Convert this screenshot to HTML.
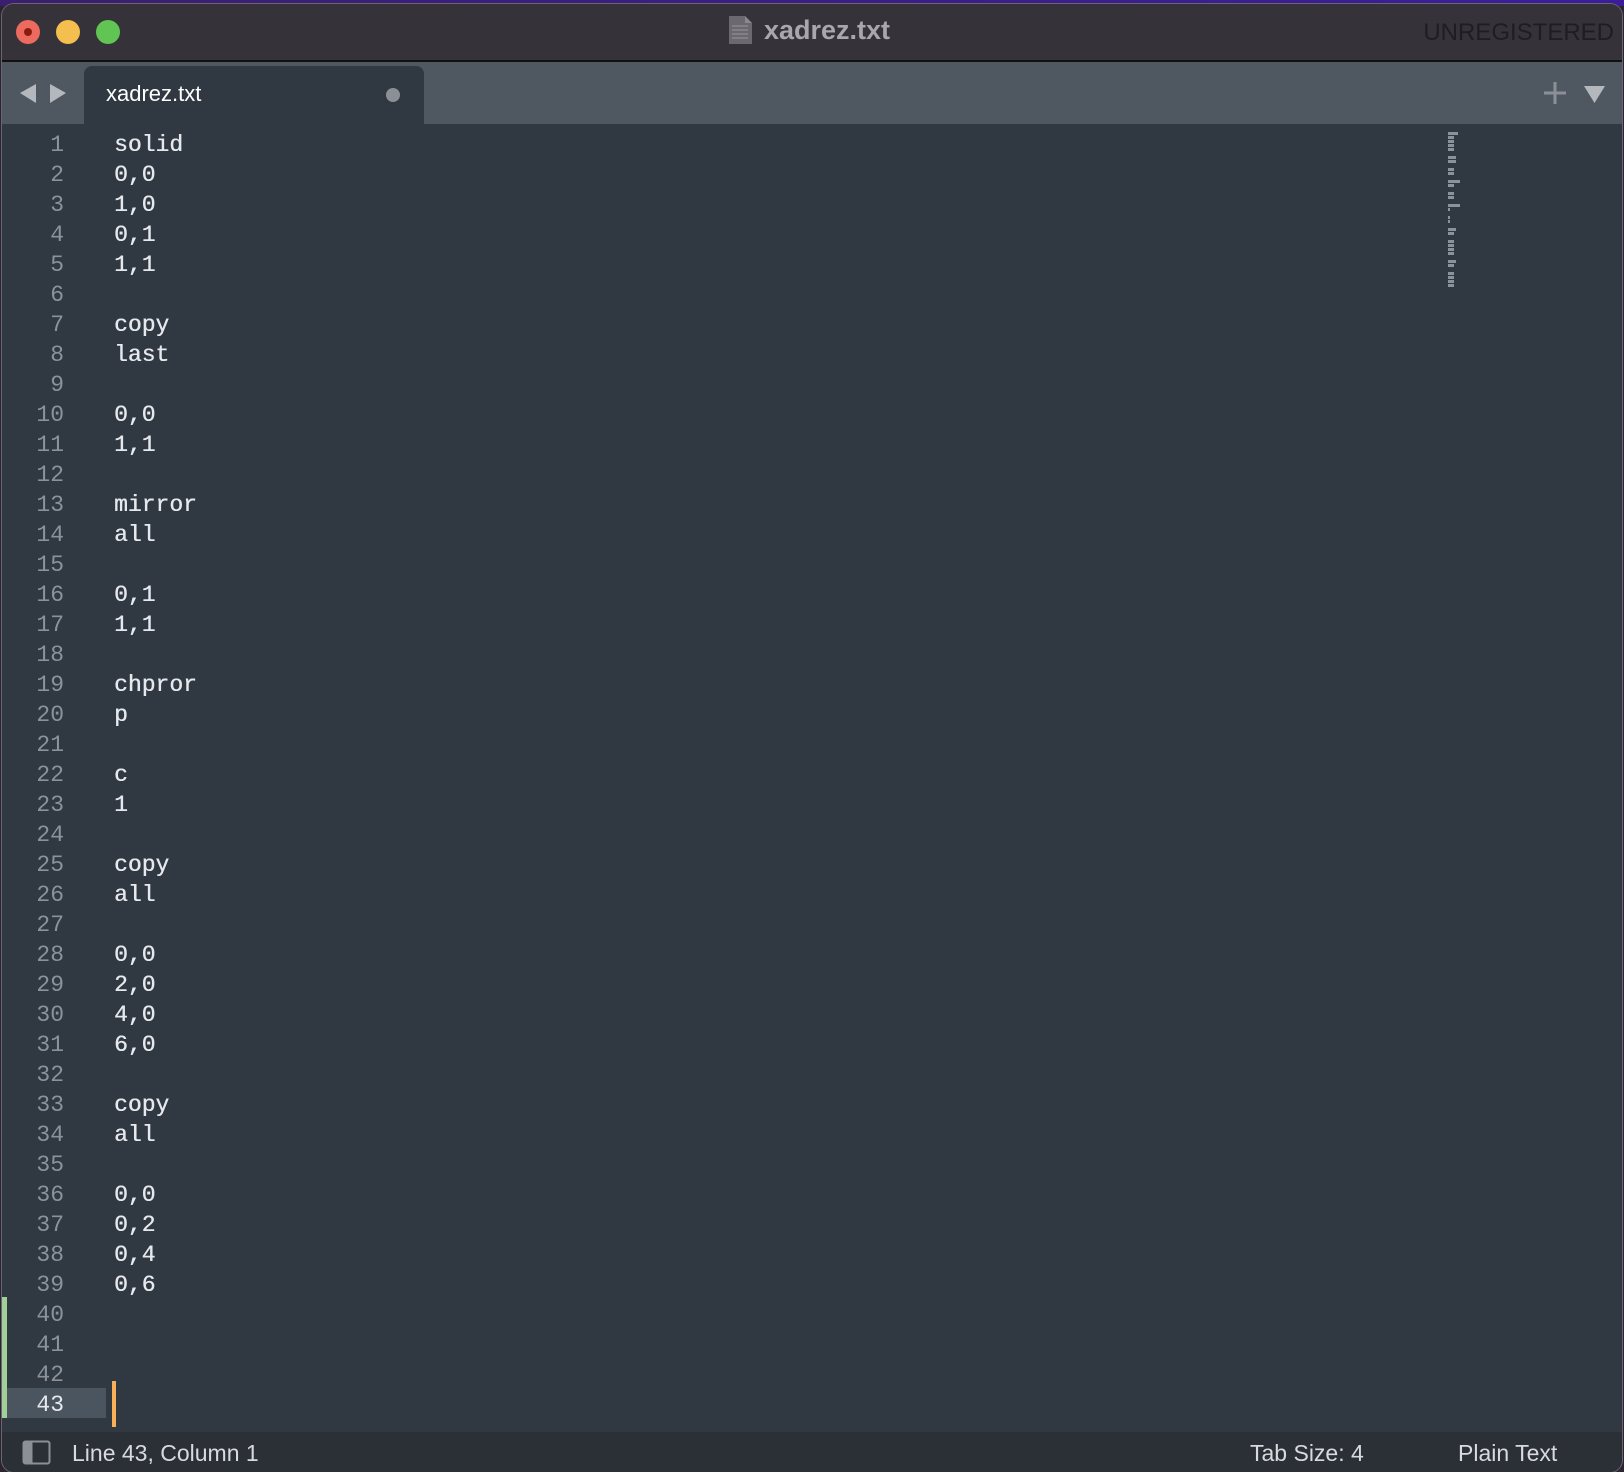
<!DOCTYPE html>
<html><head><meta charset="utf-8"><style>
html,body{margin:0;padding:0;width:1624px;height:1472px;overflow:hidden;background:#2a2530;}
body{position:relative;font-family:"Liberation Sans",sans-serif;}
.topstrip{position:absolute;left:0;top:0;width:1624px;height:6px;background:linear-gradient(90deg,#3a1f6e,#3b1d9a);}
.win{position:absolute;left:2px;top:4px;width:1620px;height:1468px;border-radius:12px;overflow:hidden;background:#303841;box-shadow:0 0 0 1px #6a6570;}
.title{position:absolute;left:0;top:0;width:100%;height:56px;background:#363239;border-bottom:2px solid #111;}
.dot{position:absolute;top:16px;width:24px;height:24px;border-radius:50%;}
.ttl{position:absolute;left:762px;top:11px;font-size:27px;font-weight:bold;color:#a9a6ad;}
.unreg{position:absolute;right:8px;top:15px;font-size:24px;color:#1f1d22;}
.tabbar{position:absolute;left:0;top:58px;width:100%;height:62px;background:#4f5760;}
.tab{position:absolute;left:82px;top:4px;width:340px;height:58px;background:#303841;border-radius:8px 8px 0 0;}
.tab span{position:absolute;left:22px;top:15px;font-size:22px;color:#fff;}
.code{position:absolute;left:0;top:126px;font-family:"Liberation Mono",monospace;font-size:23px;}
.ln{position:absolute;left:0;width:62px;text-align:right;color:#8b929a;height:30px;line-height:30px;}
.tx{position:absolute;left:112px;color:#e5e8ec;height:30px;line-height:30px;white-space:pre;text-shadow:0.4px 0 0 #e5e8ec;}
.status{position:absolute;left:0;top:1428px;width:100%;height:40px;background:#2b3037;color:#d8dadd;font-size:23px;}
.mm{position:absolute;left:1446px;height:3px;background:#8a939c;}
</style></head><body>
<div class="topstrip"></div>
<div class="win">
 <div class="title">
  <div class="dot" style="left:14px;background:#ec6a5e"><div style="position:absolute;left:8px;top:8px;width:8px;height:8px;border-radius:50%;background:#8c1a10"></div></div>
  <div class="dot" style="left:54px;background:#f4bf4f"></div>
  <div class="dot" style="left:94px;background:#61c554"></div>
  <svg style="position:absolute;left:726px;top:11px" width="25" height="30" viewBox="0 0 25 30"><path d="M1 1h16l7 7v21H1z" fill="#6b686e"/><path d="M17 1v7h7" fill="#8a878d"/><g stroke="#8a878d" stroke-width="1.5"><path d="M4 11h16M4 15h16M4 19h16M4 23h16"/></g></svg>
  <div class="ttl">xadrez.txt</div>
  <div class="unreg">UNREGISTERED</div>
 </div>
 <div class="tabbar">
  <svg style="position:absolute;left:18px;top:20px" width="48" height="22"><path d="M0 11L16 2v19z" fill="#b4b8bd"/><path d="M30 2l16 9-16 10z" fill="#b4b8bd"/></svg>
  <div class="tab"><span>xadrez.txt</span><div style="position:absolute;right:24px;top:22px;width:14px;height:14px;border-radius:50%;background:#8b9096"></div></div>
  <svg style="position:absolute;left:1542px;top:20px" width="22" height="22"><path d="M11 0v22M0 11h22" stroke="#8b9096" stroke-width="3"/></svg>
  <svg style="position:absolute;left:1582px;top:24px" width="22" height="18"><path d="M0 0h21L10.5 17z" fill="#b4b8bd"/></svg>
 </div>
 <div style="position:absolute;left:0;top:1293px;width:5px;height:121px;background:#a0cf98"></div>
 <div style="position:absolute;left:5px;top:1384px;width:99px;height:30px;background:#4b5560"></div>
 <div style="position:absolute;left:110px;top:1377px;width:4px;height:46px;background:#f9ae58"></div>
 <div class="code" id="c"></div>
 <div id="mm"></div>
 <div class="status">
  <svg style="position:absolute;left:20px;top:8px" width="30" height="26"><rect x="1.5" y="1.5" width="26" height="22" rx="2" fill="none" stroke="#8b9096" stroke-width="2"/><rect x="1.5" y="1.5" width="9" height="22" fill="#8b9096"/></svg>
  <span style="position:absolute;left:70px;top:8px">Line 43, Column 1</span>
  <span style="position:absolute;left:1248px;top:8px">Tab Size: 4</span>
  <span style="position:absolute;left:1456px;top:8px">Plain Text</span>
 </div>
</div>
<script>
var L=["solid","0,0","1,0","0,1","1,1","","copy","last","","0,0","1,1","","mirror","all","","0,1","1,1","","chpror","p","","c","1","","copy","all","","0,0","2,0","4,0","6,0","","copy","all","","0,0","0,2","0,4","0,6","","","",""];
var h="",m="";
for(var i=0;i<43;i++){var y=i*30;
h+='<div class="ln" style="top:'+y+'px'+(i==42?';color:#e5e8ec':'')+'">'+(i+1)+'</div>';
if(L[i])h+='<div class="tx" style="top:'+y+'px">'+L[i]+'</div>';
if(L[i])m+='<div class="mm" style="top:'+(128+i*4)+'px;width:'+(L[i].length*2)+'px"></div>';}
document.getElementById("c").innerHTML=h;
document.getElementById("mm").innerHTML=m;
</script>
</body></html>
